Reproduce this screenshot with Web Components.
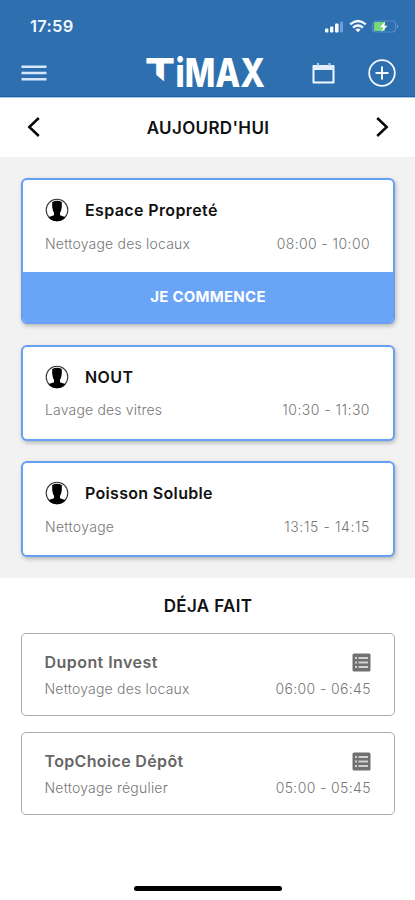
<!DOCTYPE html>
<html lang="fr">
<head>
<meta charset="utf-8">
<title>Timax</title>
<style>
body{margin:0;width:415px;height:900px;overflow:hidden;background:#fff;font-family:Inter,"Liberation Sans",sans-serif;color:#111}
</style>
</head>
<body>
<timax-app></timax-app>
<script>
const define = (name, html) => customElements.define(name, class extends HTMLElement {
  constructor() {
    super();
    const t = document.createElement('template');
    t.innerHTML = html;
    this.attachShadow({mode: 'open'}).append(t.content.cloneNode(true));
  }
});

define('status-bar', `
<style>
:host{display:flex;height:52px;box-sizing:border-box;padding:0 15px 0 30px;align-items:center;justify-content:space-between;color:#f4f8ff}
span{font-size:16.5px;font-weight:600;line-height:20px;letter-spacing:.3px}
svg{display:block}
</style>
<span>17:59</span>
<svg width="76" height="16" viewBox="0 0 76 16">
  <g fill="#f4f8ff"><rect x="1" y="10.5" width="3.4" height="4" rx="1"/><rect x="6" y="8.5" width="3.4" height="6" rx="1"/><rect x="11" y="5.5" width="3.6" height="9" rx="1"/></g>
  <rect x="16" y="3.5" width="3" height="11" rx="1" fill="#6c9ede"/>
  <g fill="none" stroke="#f4f8ff" stroke-width="2.3"><path d="M26.2 6.4Q34 -.4 41.8 6.4"/><path d="M29 9.6Q34 5.4 39 9.6"/></g>
  <path d="M31.4 11.5Q34 9.6 36.6 11.5L34 14.2Z" fill="#f4f8ff"/>
  <rect x="48.5" y="3" width="23" height="11" rx="3" fill="none" stroke="#568ad0" stroke-width="1.2"/>
  <path d="M73 6.5Q75.5 8.5 73 10.5Z" fill="#6c9ede"/>
  <rect x="50" y="4" width="11" height="9" rx="1.2" fill="#75d879"/>
  <path d="M61.5 3L56 9.2H59.3L57.5 14L63.5 7.8H60Z" fill="#fff"/>
</svg>`);

define('app-bar', `
<style>
:host{display:grid;grid-template-columns:26px 1fr 26px 28px;align-items:center;height:45px;box-sizing:border-box;padding:0 19px 3px 21px;column-gap:32px}
svg{display:block}
.logo{justify-self:end;margin-right:13px;overflow:visible}
</style>
<svg width="26" height="18" viewBox="0 0 26 18" stroke="#d5e7fc" stroke-width="2.6"><path d="M.5 2.7H25.5M.5 9H25.5M.5 15.3H25.5"/></svg>
<svg class="logo" width="119" height="32" viewBox="0 0 119 32">
  <text y="30.2" fill="#fff" font-family="Inter,'Liberation Sans',sans-serif" font-size="39.5" font-weight="800"><tspan x="-1" textLength="30" lengthAdjust="spacingAndGlyphs">T</tspan><tspan x="29.5" textLength="89.5" lengthAdjust="spacingAndGlyphs">iMAX</tspan></text>
  <path d="M8 16L20 26V32H8Z" fill="#2e6fb0"/>
</svg>
<svg width="26" height="24" viewBox="0 0 26 24"><path d="M3.5 5H23.5V21.5H3.5Z" fill="none" stroke="#f4f8ff" stroke-width="2" stroke-linejoin="round"/><path d="M3.5 4.5H23.5V9H3.5Z" fill="#dfedff"/><path d="M8 2V5M19.5 2V5" stroke="#b9cff5" stroke-width="2"/></svg>
<svg width="28" height="28" viewBox="0 0 28 28" fill="none" stroke="#f4f8ff"><circle cx="14" cy="14" r="12.8" stroke-width="1.8"/><path d="M14 7.5V20.5M7.5 14H20.5" stroke-width="2"/></svg>`);

define('day-picker', `
<style>
:host{display:flex;height:59px;box-sizing:border-box;padding:0 26px 0 27px;align-items:center;justify-content:space-between;background:#fff}
h1{margin:0;font-size:17px;line-height:20px;font-weight:600;letter-spacing:var(--ls,.4px);color:#111}
svg{display:block;margin-bottom:2px;fill:none;stroke:#080808;stroke-width:2.5}
</style>
<svg width="14" height="22" viewBox="0 0 14 22"><path d="M11.8 2L2.3 11L11.8 20"/></svg>
<h1><slot></slot></h1>
<svg width="14" height="22" viewBox="0 0 14 22"><path d="M2.2 2L11.7 11L2.2 20"/></svg>`);

define('job-card', `
<style>
:host{display:block;box-sizing:border-box;border:2px solid #65a0f2;border-radius:6px;background:#fff;box-shadow:1px 2px 4px rgba(0,0,0,.25);overflow:hidden}
.body{height:92px;box-sizing:border-box;padding:18px 23px 0 22px}
.top{display:flex;align-items:center;height:24px;gap:16px}
.top svg{display:block;width:24px;height:24px}
.row{display:flex;justify-content:space-between;margin-top:11.5px;line-height:20px;font-size:14px;font-weight:300;color:#777}
</style>
<div class="body"><div class="top">
<svg viewBox="0 0 24 24"><circle cx="12" cy="12" r="10.8" fill="#fff" stroke="#333" stroke-width="1.1"/><path d="M7.2 4Q12 1.5 16.8 4V9L16 13L15 14.8V17.3Q18.2 18.2 20.6 19.2Q17 23.2 12 23.2Q7 23.2 3.4 19.2Q5.8 18.2 9 17.3V14.8L8 13L7.2 9Z" fill="#000"/></svg>
<slot name="client"></slot></div>
<div class="row"><slot name="task"></slot><slot name="time"></slot></div></div>
<slot name="action"></slot>`);

define('start-button', `
<style>
:host{display:flex;height:50px;align-items:center;justify-content:center;box-sizing:border-box;padding-bottom:2px;background:#6aa4f7;color:#fff;font-size:15px;font-weight:700;letter-spacing:.25px}
</style><slot></slot>`);

define('done-card', `
<style>
:host{display:block;box-sizing:border-box;height:83px;border:1.5px solid #aaa;border-radius:5px;background:#fff;padding:17px 23px 0 22.5px}
.top,.row{display:flex;justify-content:space-between;align-items:center}
.top{height:22px}
.row{margin-top:6px;line-height:20px;font-size:14px;font-weight:300;color:#777}
svg{display:block}
</style>
<div class="top"><slot name="client"></slot>
<svg width="19" height="19" viewBox="0 0 19 19"><rect x=".5" y=".5" width="18" height="18" rx="1.5" fill="#707070"/><path d="M3 5H5M3 9.5H5M3 14H5M6.5 5H16M6.5 9.5H16M6.5 14H16" stroke="#d2d2d2" stroke-width="1.8"/></svg></div>
<div class="row"><slot name="task"></slot><slot name="time"></slot></div>`);

define('text-run', `
<style>:host{display:block;white-space:nowrap;letter-spacing:var(--ls,0)}
:host([strong]){font-size:16px;line-height:20px;font-weight:600}
:host([muted]){color:#666}</style><slot></slot>`);

define('timax-app', `
<style>
:host{display:flex;flex-direction:column;width:415px;height:900px;background:#fff}
header{height:98px;box-sizing:border-box;background:#2e6fb0;border-bottom:1px solid #a9c9e8;box-shadow:inset 0 -1px #1c60a5}
.today{height:421px;box-sizing:border-box;background:#f2f2f2;padding:21px 20px 0 21px;display:flex;flex-direction:column;gap:20.5px}
.done{padding:0 20px 0 21px;flex:1;display:flex;flex-direction:column;gap:16px}
h2{margin:18px 0 1px;height:20px;text-align:center;font-size:17px;line-height:20px;font-weight:600;letter-spacing:.35px}
footer{height:14px;display:flex;justify-content:center}
footer i{width:148px;height:5px;border-radius:3px;background:#000}
</style>
<header><status-bar></status-bar><app-bar></app-bar></header>
<day-picker style="--ls:.35px">AUJOURD'HUI</day-picker>
<section class="today">
<job-card><text-run strong slot="client" style="--ls:.38px">Espace Propreté</text-run><text-run slot="task" style="--ls:.2px">Nettoyage des locaux</text-run><text-run slot="time" style="--ls:.4px">08:00 - 10:00</text-run><start-button slot="action">JE COMMENCE</start-button></job-card>
<job-card><text-run strong slot="client" style="--ls:.4px">NOUT</text-run><text-run slot="task" style="--ls:.17px">Lavage des vitres</text-run><text-run slot="time" style="--ls:.47px">10:30 - 11:30</text-run></job-card>
<job-card><text-run strong slot="client" style="--ls:.32px">Poisson Soluble</text-run><text-run slot="task" style="--ls:.3px">Nettoyage</text-run><text-run slot="time" style="--ls:.6px">13:15 - 14:15</text-run></job-card>
</section>
<section class="done"><h2>DÉJA FAIT</h2>
<done-card><text-run strong muted slot="client" style="--ls:.45px">Dupont Invest</text-run><text-run slot="task" style="--ls:.2px">Nettoyage des locaux</text-run><text-run slot="time" style="--ls:.38px">06:00 - 06:45</text-run></done-card>
<done-card><text-run strong muted slot="client" style="--ls:.35px">TopChoice Dépôt</text-run><text-run slot="task" style="--ls:.2px">Nettoyage régulier</text-run><text-run slot="time" style="--ls:.38px">05:00 - 05:45</text-run></done-card>
</section>
<footer><i></i></footer>`);
</script>
</body>
</html>
